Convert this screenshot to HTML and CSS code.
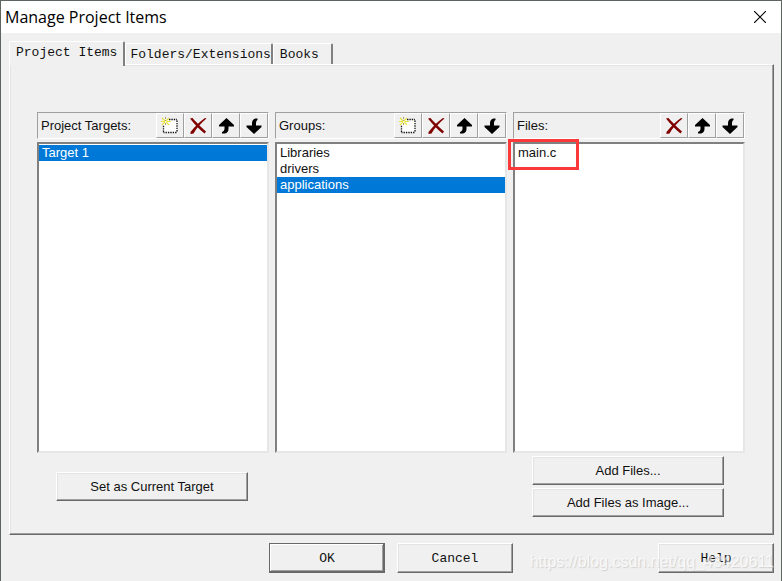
FILE: index.html
```html
<!DOCTYPE html>
<html lang="en">

<head>
    <meta charset="UTF-8">
    <meta name="viewport" content="width=device-width, initial-scale=1.0">
    <title>Manage Project Items</title>
    <link rel="stylesheet" href="styles.css">
</head>

<body>
    <!-- shared toolbar icons -->
    <svg class="sprite" aria-hidden="true">
        <symbol id="icon-new" viewBox="0 0 18 18">
            <path d="M2 3h14v13H2z" fill="#fff" />
            <path d="M8 2.500h8M16 3.500v12M15.500 15.500H2.500M2.500 15V8" fill="none" stroke="#111" stroke-width="1.300" stroke-dasharray="1.400 1" />
            <path d="M1 1l7 7M8 1L1 8M0 4.500h10" stroke="#e8e23a" stroke-width="1.100" />
            <path d="M4.500 0v9" stroke="#a5a37a" stroke-width="1" stroke-dasharray="2 1" />
            <path d="M4 4h1.500v1.500H4z" fill="#fff" />
        </symbol>
        <symbol id="icon-delete" viewBox="0 0 18 18">
            <path d="M1 1.500L3.500 1C6.500 4.500 12 10 17 14.500L15.500 16.500C10.500 12.500 5 7 1 1.500z" fill="#800000" />
            <path d="M16 1L17.500 1.500C12 6 7.500 11 4.500 16.500L1.500 17L1.500 15C6 9.500 10.500 4.500 16 1z" fill="#800000" />
        </symbol>
        <symbol id="icon-up" viewBox="0 0 18 18">
            <path d="M9.500 1L17 8v1.500h-5.500V12c0 2.500-1.500 4-3.500 4.500H5V15c1.500-.5 2.500-1.500 2.500-3.500v-2H2V8z" />
        </symbol>
        <symbol id="icon-down" viewBox="0 0 18 18">
            <path d="M9 17L1.500 10V8.500H7V6c0-2.500 1.500-4 3.500-4.500h2V3C11.500 3.500 11 4.500 11 6.500v2h5.500V10z" />
        </symbol>
    </svg>

    <div class="dialog">
        <header class="titlebar">
            <h1>Manage Project Items</h1>
            <button class="close" type="button" aria-label="Close">
                <svg viewBox="0 0 12 12"><path d="M0 0L12 12M12 0L0 12" stroke="#000" stroke-width="1.200" /></svg>
            </button>
        </header>

        <main class="content">
            <div class="tabs" role="tablist">
                <button class="tab active" type="button" role="tab" aria-selected="true">Project Items</button>
                <button class="tab" type="button" role="tab" aria-selected="false">Folders/Extensions</button>
                <button class="tab" type="button" role="tab" aria-selected="false">Books</button>
            </div>

            <div class="panel" role="tabpanel">
                <section class="column">
                    <div class="column-head">
                        <label for="targets">Project Targets:</label>
                        <div class="tools">
                            <button type="button" aria-label="New"><svg><use href="#icon-new" /></svg></button>
                            <button type="button" aria-label="Delete"><svg><use href="#icon-delete" /></svg></button>
                            <button type="button" aria-label="Move up"><svg><use href="#icon-up" /></svg></button>
                            <button type="button" aria-label="Move down"><svg><use href="#icon-down" /></svg></button>
                        </div>
                    </div>
                    <select class="list" id="targets" size="4">
                        <option selected>Target 1</option>
                    </select>
                    <div class="actions single">
                        <button class="btn" type="button">Set as Current Target</button>
                    </div>
                </section>

                <section class="column">
                    <div class="column-head">
                        <label for="groups">Groups:</label>
                        <div class="tools">
                            <button type="button" aria-label="New"><svg><use href="#icon-new" /></svg></button>
                            <button type="button" aria-label="Delete"><svg><use href="#icon-delete" /></svg></button>
                            <button type="button" aria-label="Move up"><svg><use href="#icon-up" /></svg></button>
                            <button type="button" aria-label="Move down"><svg><use href="#icon-down" /></svg></button>
                        </div>
                    </div>
                    <select class="list" id="groups" size="4">
                        <option>Libraries</option>
                        <option>drivers</option>
                        <option selected>applications</option>
                    </select>
                    <div class="actions"></div>
                </section>

                <section class="column">
                    <div class="column-head">
                        <label for="files">Files:</label>
                        <div class="tools">
                            <button type="button" aria-label="Delete"><svg><use href="#icon-delete" /></svg></button>
                            <button type="button" aria-label="Move up"><svg><use href="#icon-up" /></svg></button>
                            <button type="button" aria-label="Move down"><svg><use href="#icon-down" /></svg></button>
                        </div>
                    </div>
                    <div class="list-wrap">
                        <select class="list" id="files" size="4">
                            <option>main.c</option>
                        </select>
                        <span class="marker"></span>
                    </div>
                    <div class="actions">
                        <button class="btn" type="button">Add Files...</button>
                        <button class="btn" type="button">Add Files as Image...</button>
                    </div>
                </section>
            </div>
        </main>

        <footer class="footer">
            <button class="btn default" type="button">OK</button>
            <button class="btn" type="button">Cancel</button>
            <button class="btn help" type="button">Help</button>
            <span class="watermark">https://blog.csdn.net/qq_43420611</span>
        </footer>
    </div>
</body>

</html>
```

FILE: styles.css
```css
* {
    box-sizing: border-box;
}

body {
    margin: 0;
    font-family: "Liberation Sans", Arial, sans-serif;
    font-size: 13px;
    color: #111;
}

button,
select {
    font: inherit;
    color: inherit;
    padding: 0;
    border-radius: 0;
}

.sprite {
    position: absolute;
    width: 0;
    height: 0;
}

.dialog {
    display: flex;
    flex-direction: column;
    min-height: 100vh;
    background: #f0f0f0;
    border: 1px solid #5f665f;
    border-bottom: none;
}

.titlebar {
    display: flex;
    align-items: center;
    justify-content: space-between;
    height: 32px;
    padding: 0 15px 0 4px;
    background: #fff;
}

.titlebar h1 {
    margin: 0;
    font: 16px "Open Sans", "Noto Sans", sans-serif;
    color: #000;
}

.close {
    display: flex;
    border: none;
    background: none;
}

.close svg {
    width: 12px;
    height: 12px;
}

/* tabs */
.content {
    flex: 1;
    display: flex;
    flex-direction: column;
    padding: 8px 7px 0 8px;
}

.tabs {
    display: flex;
    align-items: flex-end;
    height: 23px;
}

.tab {
    height: 21px;
    padding: 0 0 0 4px;
    background: #f0f0f0;
    border: solid;
    border-width: 1px 2px 0 1px;
    border-color: #fff #808080 #fff #fff;
    border-radius: 2px 2px 0 0;
    font-family: "Liberation Mono", monospace;
}

.tab.active {
    position: relative;
    height: 25px;
    margin-bottom: -2px;
    padding: 0 6px 3px;
}

.tab:last-child {
    padding: 0 12px 0 6px;
}

.panel {
    flex: 1;
    display: grid;
    grid-template-columns: repeat(3, 1fr);
    gap: 6px;
    padding: 47px 28px 1px 27px;
    border: 1px solid;
    border-color: #fff #696969 #696969 #fff;
    box-shadow: inset -1px -1px #a0a0a0, inset 1px 1px #e3e3e3;
}

/* columns */
.column {
    display: flex;
    flex-direction: column;
    min-width: 0;
}

.column-head {
    display: flex;
    align-items: center;
    justify-content: space-between;
    height: 27px;
    padding-left: 3px;
    border: 1px solid;
    border-color: #a0a0a0 #fff #fff #a0a0a0;
}

.tools {
    display: flex;
}

.tools button {
    display: flex;
    align-items: center;
    justify-content: center;
    width: 28px;
    height: 25px;
    background: #f0f0f0;
    border: 1px solid;
    border-color: #fff #a0a0a0 #a0a0a0 #fff;
}

.tools svg {
    width: 18px;
    height: 18px;
}

.list-wrap {
    position: relative;
    flex: 1;
    display: flex;
}

.list {
    flex: 1;
    width: 100%;
    margin-top: 3px;
    padding-top: 1px;
    background: #fff;
    border: 2px solid;
    border-color: #808080 #e6e6e6 #e6e6e6 #808080;
    outline: none;
    overflow: hidden;
}

.list option {
    min-height: 16px;
    padding: 0 3px;
    line-height: 16px;
}

.list option:checked {
    background: #0078d7 linear-gradient(#0078d7, #0078d7);
    color: #fff;
    -webkit-text-fill-color: #fff;
}

/* red frame round the file name */
.marker {
    position: absolute;
    top: 0;
    left: -5px;
    width: 71px;
    height: 31px;
    border: 3px solid #fa3a3a;
    pointer-events: none;
}

.actions {
    display: flex;
    flex-direction: column;
    gap: 3px;
    height: 80px;
    padding: 3px 21px 0 19px;
}

.actions.single {
    padding-top: 19px;
}

/* buttons */
.btn {
    height: 29px;
    background: #f0f0f0;
    border: 1px solid;
    border-color: #fff #696969 #696969 #fff;
    box-shadow: inset -1px -1px #a0a0a0, inset 1px 1px #e3e3e3;
}

.footer {
    position: relative;
    display: flex;
    gap: 12px;
    padding: 8px 7px 8px 268px;
}

.footer .btn {
    width: 116px;
    height: 30px;
    font-family: "Liberation Mono", monospace;
}

.btn.default {
    border-color: #696969;
    box-shadow: inset -1px -1px #696969, inset 1px 1px #fff, inset -2px -2px #a0a0a0;
}

.footer .help {
    margin-left: auto;
}

.watermark {
    position: absolute;
    right: 7px;
    bottom: 10px;
    font-size: 16px;
    color: #fff;
    opacity: 0.6;
    text-shadow: 1px 1px 1px #bbb;
    pointer-events: none;
}
```
